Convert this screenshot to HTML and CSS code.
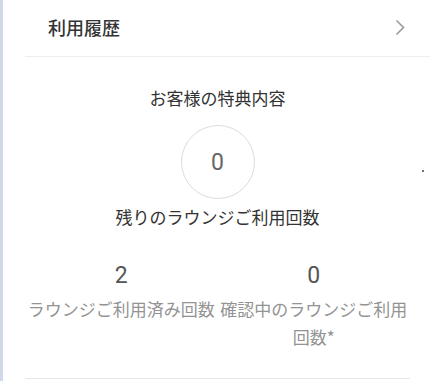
FILE: index.html
```html
<!DOCTYPE html>
<html lang="ja">
<head>
<meta charset="utf-8">
<link rel="stylesheet" href="styles.css">
</head>
<body>
<div class="page">
  <div class="strip"></div>
  <main class="main">
    <div class="row-link">
      <span class="row-title">利用履歴</span>
      <svg class="chev" width="10" height="17" viewBox="0 0 10 17"><path d="M1.5 1.5 L8.5 8.5 L1.5 15.5" fill="none" stroke="#9a9a9a" stroke-width="1.6"/></svg>
    </div>
    <section class="benefit">
      <h2 class="benefit-title">お客様の特典内容</h2>
      <div class="circle">0</div>
      <p class="remain">残りのラウンジご利用回数</p>
      <div class="stats">
        <div class="stat">
          <div class="num">2</div>
          <div class="label">ラウンジご利用済み回数</div>
        </div>
        <div class="stat">
          <div class="num">0</div>
          <div class="label">確認中のラウンジご利用回数*</div>
        </div>
      </div>
    </section>
    <span class="dot"></span>
  </main>
</div>
</body>
</html>
```
FILE: styles.css
```css
html, body {
  margin: 0;
  padding: 0;
  background: #ffffff;
}
body {
  font-family: "Noto Sans CJK JP", "Noto Sans", Roboto, sans-serif;
  width: 430px;
  height: 381px;
  overflow: hidden;
}
.page {
  display: flex;
  height: 381px;
}
.strip {
  width: 3px;
  flex: none;
  background: #cfd9eb;
}
.main {
  flex: 1;
  margin-left: 22px;
  position: relative;
}
.row-link {
  height: 56px;
  border-bottom: 1px solid #eeeeee;
  display: flex;
  align-items: center;
  justify-content: space-between;
  padding: 0 25px 0 23px;
}
.row-title {
  font-size: 18px;
  font-weight: 500;
  color: #333333;
  line-height: 24px;
  margin-top: -3px;
}
.chev {
  display: block;
  margin-top: -2px;
}
.benefit {
  margin-right: 20px;
  padding: 29px 0 27px;
  border-bottom: 1px solid #e6e6e6;
  display: flex;
  flex-direction: column;
  align-items: center;
}
.benefit-title {
  margin: 0;
  font-size: 17px;
  font-weight: 400;
  line-height: 24px;
  color: #333333;
}
.circle {
  margin-top: 15px;
  width: 72px;
  height: 72px;
  border: 1px solid #dcdcdc;
  border-radius: 50%;
  display: flex;
  align-items: center;
  justify-content: center;
  font-family: Roboto, "Noto Sans", sans-serif;
  font-size: 23px;
  color: #666666;
}
.remain {
  margin: 6px 0 0;
  font-size: 17px;
  line-height: 24px;
  color: #333333;
}
.stats {
  margin-top: 33px;
  width: 100%;
  display: grid;
  grid-template-columns: 1fr 1fr;
}
.stat {
  display: flex;
  flex-direction: column;
  align-items: center;
  text-align: center;
}
.num {
  font-family: Roboto, "Noto Sans", sans-serif;
  font-size: 23px;
  line-height: 28px;
  color: #555555;
}
.label {
  margin-top: 5px;
  font-size: 17px;
  line-height: 28px;
  color: #939393;
}
.dot {
  position: absolute;
  left: 397px;
  top: 170px;
  width: 2px;
  height: 2px;
  border-radius: 50%;
  background: #444444;
}
```
